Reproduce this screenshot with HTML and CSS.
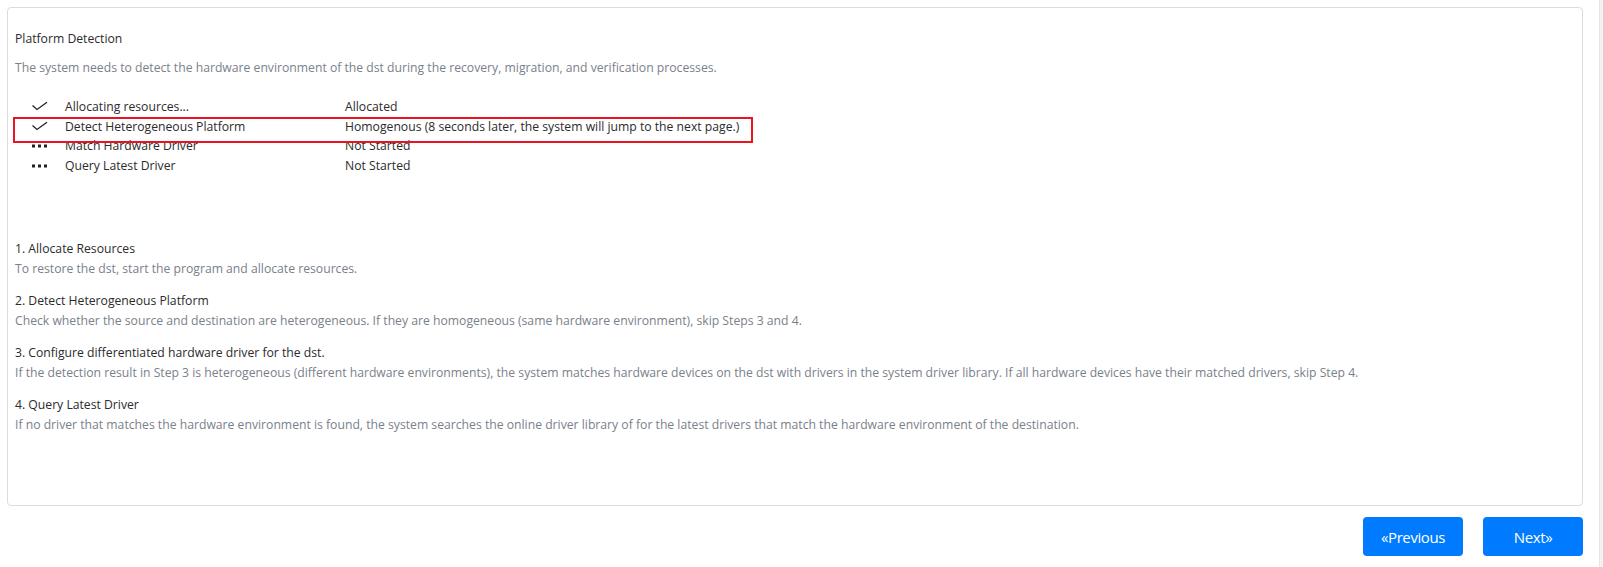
FILE: index.html
```html
<!DOCTYPE html>
<html>
<head>
<meta charset="utf-8">
<link rel="stylesheet" href="styles.css">
</head>
<body>
<div class="page">
  <div class="main">
    <div class="card">
      <div class="title">Platform Detection</div>
      <div class="muted intro">The system needs to detect the hardware environment of the dst during the recovery, migration, and verification processes.</div>
      <div class="status-list">
        <div class="row">
          <span class="icon"><svg width="17" height="11" viewBox="0 0 17 11"><path d="M1.5 4.5 L6 8.5 L16 1.2" fill="none" stroke="#222" stroke-width="1.3"/></svg></span>
          <span class="name">Allocating resources...</span>
          <span class="state">Allocated</span>
        </div>
        <div class="row">
          <span class="icon"><svg width="17" height="11" viewBox="0 0 17 11"><path d="M1.5 4.5 L6 8.5 L16 1.2" fill="none" stroke="#222" stroke-width="1.3"/></svg></span>
          <span class="name">Detect Heterogeneous Platform</span>
          <span class="state">Homogenous (8 seconds later, the system will jump to the next page.)</span>
        </div>
        <div class="row">
          <span class="icon"><svg width="17" height="11" viewBox="0 0 17 11"><rect x="1" y="4.5" width="3" height="3" fill="#222"/><rect x="7" y="4.5" width="3" height="3" fill="#222"/><rect x="13" y="4.5" width="3" height="3" fill="#222"/></svg></span>
          <span class="name">Match Hardware Driver</span>
          <span class="state">Not Started</span>
        </div>
        <div class="row">
          <span class="icon"><svg width="17" height="11" viewBox="0 0 17 11"><rect x="1" y="4.5" width="3" height="3" fill="#222"/><rect x="7" y="4.5" width="3" height="3" fill="#222"/><rect x="13" y="4.5" width="3" height="3" fill="#222"/></svg></span>
          <span class="name">Query Latest Driver</span>
          <span class="state">Not Started</span>
        </div>
        <div class="highlight"></div>
      </div>
      <div class="steps">
        <div class="step">
          <div class="step-title">1. Allocate Resources</div>
          <div class="muted">To restore the dst, start the program and allocate resources.</div>
        </div>
        <div class="step">
          <div class="step-title">2. Detect Heterogeneous Platform</div>
          <div class="muted">Check whether the source and destination are heterogeneous. If they are homogeneous (same hardware environment), skip Steps 3 and 4.</div>
        </div>
        <div class="step">
          <div class="step-title">3. Configure differentiated hardware driver for the dst.</div>
          <div class="muted">If the detection result in Step 3 is heterogeneous (different hardware environments), the system matches hardware devices on the dst with drivers in the system driver library. If all hardware devices have their matched drivers, skip Step 4.</div>
        </div>
        <div class="step">
          <div class="step-title">4. Query Latest Driver</div>
          <div class="muted">If no driver that matches the hardware environment is found, the system searches the online driver library of for the latest drivers that match the hardware environment of the destination.</div>
        </div>
      </div>
    </div>
    <div class="actions">
      <button class="btn">«Previous</button>
      <button class="btn">Next»</button>
    </div>
  </div>
  <div class="scrollbar"></div>
</div>
</body>
</html>
```
FILE: styles.css
```css
html, body {
  margin: 0;
  padding: 0;
  background: #fff;
}
body {
  font-family: "Open Sans", "Noto Sans", sans-serif;
  font-size: 12.2px;
  color: #333;
}
.page {
  display: flex;
  min-height: 567px;
}
.main {
  flex: 1;
  padding: 7px 16px 0 7px;
}
.scrollbar {
  width: 3px;
  background: #f2f2f2;
  border-left: 1px solid #e4e4e4;
}
.card {
  border: 1px solid #dcdcdc;
  border-radius: 4px;
  background: #fff;
  padding: 21px 7px 70px 7px;
}
.title {
  line-height: 20px;
  color: #2b2b2b;
}
.muted {
  color: #7a818b;
  line-height: 20px;
}
.intro {
  margin-top: 9px;
}
.status-list {
  position: relative;
  margin-top: 19px;
}
.row {
  display: flex;
  align-items: center;
  height: 19.5px;
  line-height: 19.5px;
  color: #2b2b2b;
}
.icon {
  width: 17px;
  height: 11px;
  margin-left: 16px;
  margin-right: 17px;
  display: flex;
}
.icon svg {
  display: block;
}
.name {
  width: 280px;
}
.highlight {
  position: absolute;
  left: -2px;
  top: 19.5px;
  width: 736px;
  height: 22px;
  border: 2px solid #e8141f;
  pointer-events: none;
}
.steps {
  margin-top: 64px;
  display: flex;
  flex-direction: column;
  gap: 12px;
}
.step-title {
  line-height: 20px;
  color: #2b2b2b;
}
.actions {
  display: flex;
  justify-content: flex-end;
  gap: 20px;
  margin-top: 11px;
}
.btn {
  width: 100px;
  height: 39px;
  border: none;
  border-radius: 4px;
  background: #007bff;
  color: #fff;
  font-family: "Open Sans", "Noto Sans", sans-serif;
  font-size: 15px;
  letter-spacing: -0.4px;
  padding: 0;
  cursor: pointer;
}
```
